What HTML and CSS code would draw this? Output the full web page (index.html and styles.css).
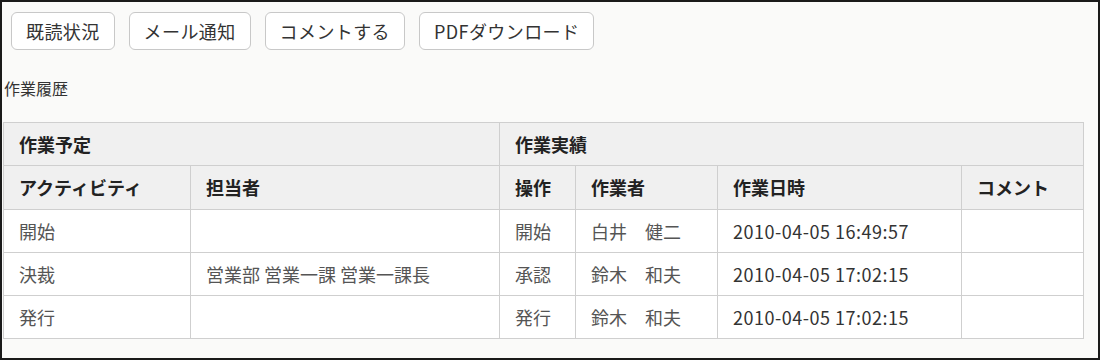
FILE: index.html
```html
<!DOCTYPE html>
<html lang="ja">
<head>
<meta charset="utf-8">
<link rel="stylesheet" href="styles.css">
</head>
<body>
<div class="frame">
  <div class="toolbar">
    <button class="btn" type="button">既読状況</button>
    <button class="btn" type="button">メール通知</button>
    <button class="btn" type="button">コメントする</button>
    <button class="btn" type="button">PDFダウンロード</button>
  </div>
  <div class="section-title">作業履歴</div>
  <table class="history">
    <colgroup>
      <col class="c1"><col class="c2"><col class="c3"><col class="c4"><col class="c5"><col class="c6">
    </colgroup>
    <thead>
      <tr>
        <th colspan="2">作業予定</th>
        <th colspan="4">作業実績</th>
      </tr>
      <tr>
        <th>アクティビティ</th>
        <th>担当者</th>
        <th>操作</th>
        <th>作業者</th>
        <th>作業日時</th>
        <th>コメント</th>
      </tr>
    </thead>
    <tbody>
      <tr>
        <td>開始</td>
        <td></td>
        <td>開始</td>
        <td>白井　健二</td>
        <td class="date">2010-04-05 16:49:57</td>
        <td></td>
      </tr>
      <tr>
        <td>決裁</td>
        <td>営業部 営業一課 営業一課長</td>
        <td>承認</td>
        <td>鈴木　和夫</td>
        <td class="date">2010-04-05 17:02:15</td>
        <td></td>
      </tr>
      <tr>
        <td>発行</td>
        <td></td>
        <td>発行</td>
        <td>鈴木　和夫</td>
        <td class="date">2010-04-05 17:02:15</td>
        <td></td>
      </tr>
    </tbody>
  </table>
</div>
</body>
</html>
```

FILE: styles.css
```css
html, body {
  margin: 0;
  padding: 0;
  background: #1a1a1a;
}
body {
  font-family: "Noto Sans CJK JP", "Noto Sans", sans-serif;
}
.frame {
  box-sizing: border-box;
  width: 1100px;
  height: 360px;
  border: 2px solid #1a1a1a;
  background: #fafaf9;
  padding-left: 1px;
}
.toolbar {
  display: flex;
  gap: 14px;
  padding: 10px 0 0 8px;
}
.btn {
  height: 38px;
  padding: 0 14px;
  background: #ffffff;
  border: 1px solid #c8c8c8;
  border-radius: 6px;
  font-family: inherit;
  font-size: 18px;
  letter-spacing: 0.4px;
  color: #333;
  line-height: 36px;
}
.section-title {
  margin-top: 26px;
  margin-left: 1px;
  font-size: 16px;
  line-height: 24px;
  color: #333;
}
.history {
  margin-top: 22px;
  width: 1080px;
  table-layout: fixed;
  border-collapse: collapse;
  background: #ffffff;
  font-size: 18px;
}
.c1 { width: 187px; }
.c2 { width: 309px; }
.c3 { width: 76px; }
.c4 { width: 142px; }
.c5 { width: 244px; }
.c6 { width: 122px; }
.history th,
.history td {
  border: 1px solid #cfcfcf;
  height: 43.3px;
  padding: 0 15px;
  text-align: left;
  white-space: nowrap;
  box-sizing: border-box;
}
.history th {
  background: #f0f0f0;
  font-weight: bold;
  color: #222;
}
.history td {
  color: #555;
  font-weight: normal;
}
.history td.date {
  color: #333;
  letter-spacing: 0.5px;
}
```
